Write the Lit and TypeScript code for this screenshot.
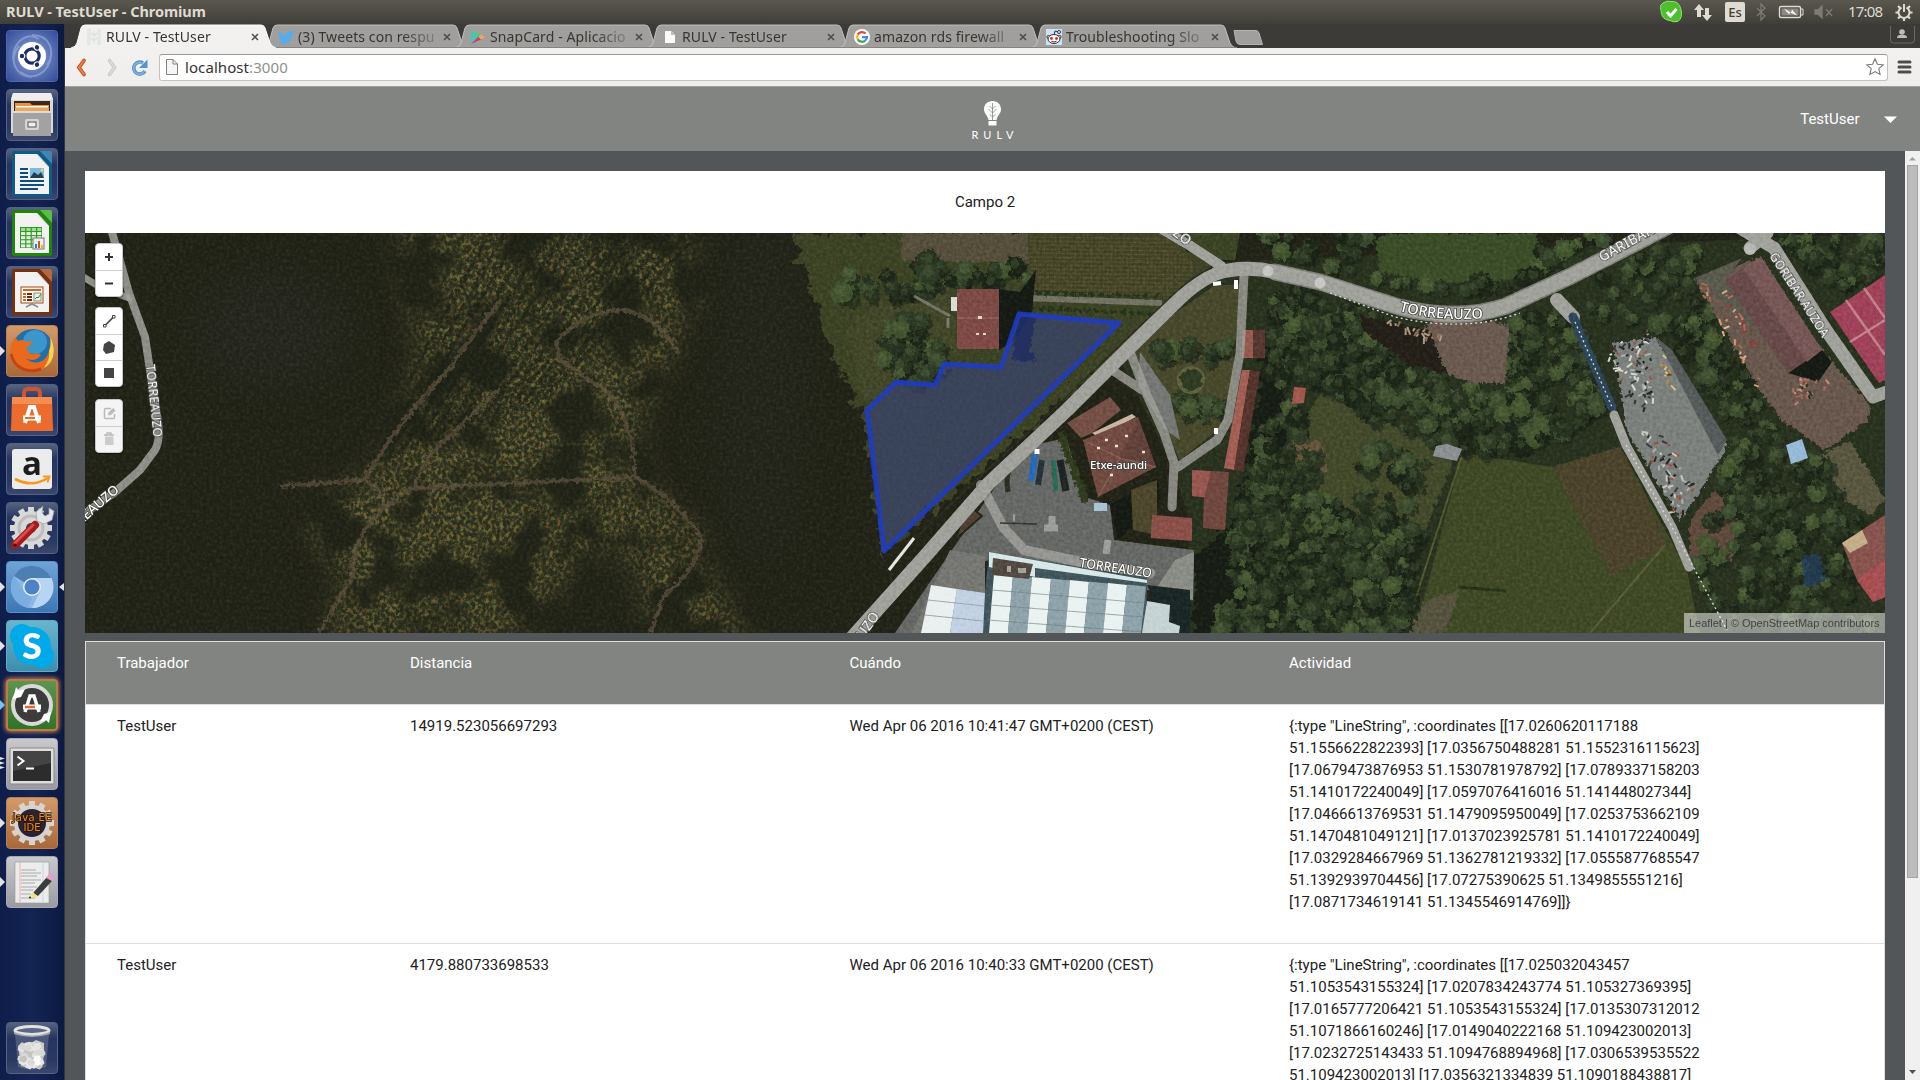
import { LitElement, html, svg, css } from 'lit';
import { customElement, property } from 'lit/decorators.js';

type Pt = [number, number];

const pts = (list: Pt[]) => list.map((p) => p.join(',')).join(' ');

// Small seeded generator so the scenery is the same on every render
function random(seed: number) {
    let s = seed;
    return () => {
        s = (s * 16807) % 2147483647;
        return s / 2147483647;
    };
}

function inside(x: number, y: number, poly: Pt[]) {
    let hit = false;
    for (let i = 0, j = poly.length - 1; i < poly.length; j = i++) {
        const [xi, yi] = poly[i];
        const [xj, yj] = poly[j];
        if (yi > y !== yj > y && x < ((xj - xi) * (y - yi)) / (yj - yi) + xi) hit = !hit;
    }
    return hit;
}

@customElement('dock-launcher')
export class DockLauncher extends LitElement {
    static styles = css`
    :host {
      display: flex;
      flex-direction: column;
      gap: 7px;
      box-sizing: border-box;
      width: 65px;
      height: 1056px;
      padding: 6px 0 6px 6px;
      background: linear-gradient(90deg, #0e1d49, #142453 50%, #0c1a42);
      border-right: 1px solid #34353f;
    }

    .item {
      position: relative;
      width: 52px;
      height: 52px;
      flex: none;
    }

    .item:last-child { margin-top: auto; }

    .tile {
      box-sizing: border-box;
      width: 52px;
      height: 52px;
      border-radius: 4px;
      background: linear-gradient(#56637f, #263560 30%, #2a3963 75%, #3b476d);
      border: 1px solid #56627f;
      overflow: hidden;
    }

    .tile.dash { background: radial-gradient(circle at 50% 50%, #8fa2d2 10%, #5a72b4 55%, #314b98); border-color: #4f68ad; }
    .tile.orange { background: linear-gradient(#d39a68, #a96839); border-color: #b88055; }
    .tile.blue { background: linear-gradient(#6fa4d6, #3d76b5); border-color: #5c91c4; }
    .tile.cyan { background: linear-gradient(#69b5cd, #3d8eae); border-color: #63abc4; }
    .tile.green { background: linear-gradient(#5c9550, #2f7427); border: 2px solid #c07a45; box-shadow: 0 0 4px 1px #c9814b; }
    .tile.gray { background: linear-gradient(#c9c9cd, #9a9aa2); border-color: #a9a9b1; }

    .tile svg {
      display: block;
      width: 52px;
      height: 52px;
      margin: -1px;
    }

    .tile.green svg { margin: -2px; }

    .mark {
      position: absolute;
      left: -6px;
      top: 15px;
      width: 6px;
      height: 22px;
    }

    .mark.right { left: 53px; }
  `;

    office(color: string, light: string, inner: unknown) {
        return svg`
      <path d="M8 3h26l12 13v31q0 2-2 2H8q-2 0-2-2V5q0-2 2-2z" fill="${color}"/>
      <path d="M34 3h10q2 0 2 2v11z" fill="${light}"/>
      <path d="M9 6h22l12 13v27H9z" fill="#f2f2f2"/>
      <path d="M31 6l12 13" stroke="#bbb"/>
      ${inner}`;
    }

    gear(cx: number, cy: number, r: number, fill: string) {
        const teeth = Array.from({ length: 12 }, (_, i) => i * 30);
        return svg`
      ${teeth.map((a) => svg`<rect x="${cx - 3}" y="${cy - r - 4}" width="6" height="8" fill="${fill}" transform="rotate(${a} ${cx} ${cy})"/>`)}
      <circle cx="${cx}" cy="${cy}" r="${r}" fill="${fill}"/>`;
    }

    icon(name: string) {
        switch (name) {
            case 'dash':
                return svg`
          <path d="M7 29C7 10 22 2 33 9M45 26C43 43 27 52 15 42M26 5c18 0 24 17 15 30M26 47C9 46 2 29 13 16" fill="none" stroke="#a6b6df" stroke-width="2" opacity=".55"/>
          <circle cx="26" cy="26" r="14" fill="#fff"/>
          <circle cx="26" cy="26" r="7.2" fill="none" stroke="#1c2d63" stroke-width="3.2"/>
          ${[60, 180, 300].map((a) => svg`<g transform="rotate(${a} 26 26)"><circle cx="36" cy="26" r="3.3" fill="#fff"/><circle cx="36" cy="26" r="2.2" fill="#1c2d63"/></g>`)}`;
            case 'files':
                return svg`
          <path d="M7 4h38l2 6v34H5V10z" fill="#d9d9d9"/><path d="M7 4h38l2 7H5z" fill="#eee"/>
          <path d="M8 12h36v12H8z" fill="#3a2a22"/>
          <path d="M9 14h15l2 2h17v8H9z" fill="#e8913f"/><path d="M10 17h32v1.500H10z" fill="#fff"/>
          <path d="M9 19h34v4H9z" fill="#eda557"/>
          <path d="M7 22h38v25H7z" fill="#a2a2a2"/><path d="M7 22h38v2H7z" fill="#dcdcdc"/>
          <rect x="19" y="30" width="14" height="11" rx="2" fill="#d5d5d5"/>
          <rect x="22" y="33" width="8" height="5" fill="#eee" stroke="#555"/>`;
            case 'writer':
                return this.office('#0d5a8c', '#3c87b3', svg`
          <path d="M14 21h8M14 25h8M14 29h8M14 33h24M14 37h24M14 41h18" stroke="#0d4f7c" stroke-width="2"/>
          <rect x="24" y="20" width="14" height="10" fill="#78bae3"/><path d="M24 30l4-6 4 3 3-3 3 6z" fill="#26404a"/><circle cx="36" cy="22" r="1.500" fill="#f5d44d"/>`);
            case 'calc':
                return this.office('#1e8708', '#5bbd45', svg`
          <rect x="14" y="20" width="22" height="21" fill="#2f9a24"/>
          ${[0, 1, 2, 3].map((c) => [0, 1, 2, 3, 4].map((r) => svg`<rect x="${15 + c * 5.4}" y="${21 + r * 4.1}" width="4.200" height="3" fill="${r ? '#e9f8e4' : '#9ede92'}"/>`))}
          <rect x="27" y="31" width="11" height="11" fill="#eee" stroke="#777"/>
          <path d="M29 41v-4h2v4z" fill="#1e88c9"/><path d="M32 41v-7h2v7z" fill="#d05a1d"/><path d="M35 41v-3h2v3z" fill="#e9bb23"/>`);
            case 'impress':
                return this.office('#7a2f0d', '#b4683d', svg`
          <rect x="15" y="21" width="22" height="16" fill="#fff6ef" stroke="#a24b18"/>
          <path d="M17 24h18" stroke="#c96a2a" stroke-width="2"/>
          <path d="M17 28h3M17 31h3M17 34h3" stroke="#c96a2a" stroke-width="2"/><path d="M21 28h5M21 31h5M21 34h5" stroke="#6a2b0d" stroke-width="2"/>
          <rect x="28" y="27" width="7" height="8" fill="#e5f2e2" stroke="#777" stroke-width=".8"/><path d="M29 33l2-2 1 1 3-4" fill="none" stroke="#3b8a2e"/>
          <path d="M26 37v2M26 38l-6 3M26 38l6 3" stroke="#888" stroke-width="1.500"/>`);
            case 'firefox':
                return svg`
          <circle cx="27" cy="25" r="21" fill="#1f6fae"/><circle cx="29" cy="17" r="12" fill="#4fb0dc" opacity=".6"/>
          <path d="M44 12c7 12 4 26-7 32C23 52 5 43 4 27c0-7 3-12 5-15l3 4c3-2 6-1 8 1l6-1c0 4-3 5-5 6 0 4 3 8 8 7 3-1 5 0 6 1-4 6-11 6-15 3 5 7 18 6 22-4 2-6 3-11 2-17z" fill="#e96a1c"/>
          <path d="M44 12c7 12 4 26-6 31 4-6 6-12 5-17 2-5 2-9 1-14z" fill="#f9d64a"/>
          <path d="M5 29c3 14 17 20 30 15" fill="none" stroke="#c8430f" stroke-width="3"/>`;
            case 'software':
                return svg`
          <path d="M18 17V9q0-4 4-4h8q4 0 4 4v8" fill="none" stroke="#c95634" stroke-width="4"/>
          <path d="M6 13h40l1 34H5z" fill="#ec6c2d"/><path d="M6 13h40v7H6z" fill="#f58d52"/>
          <path d="M19 39l5-16h4l5 16" fill="none" stroke="#fff" stroke-width="4"/><path d="M17 34h18" stroke="#fff" stroke-width="5"/><path d="M19 34h10" stroke="#ec6c2d" stroke-width="2"/>`;
            case 'amazon':
                return svg`
          <rect x="6" y="6" width="40" height="40" rx="3" fill="#ececec"/>
          <text x="26" y="32" text-anchor="middle" font-family="Open Sans, sans-serif" font-weight="700" font-size="33" fill="#1d1d1d">a</text>
          <path d="M9 36q17 9 33-1" fill="none" stroke="#f79a1c" stroke-width="2.600"/><path d="M37 33.500h6.500l-2 6" fill="none" stroke="#f79a1c" stroke-width="2"/>`;
            case 'settings':
                return svg`
          ${this.gear(25, 26, 17, '#d8d8d8')}
          <circle cx="25" cy="26" r="12" fill="none" stroke="#bcbcbc" stroke-width="3"/><circle cx="25" cy="26" r="5" fill="#36425f"/>
          <path d="M28 24L37 15" stroke="#c9ced1" stroke-width="7"/>
          <path d="M37 4l-7 6 1 9 7 3 8-4 2-9-5-3 0 6-4 2-3-3z" fill="#e3e6e8" stroke="#9aa0a4" stroke-width=".7"/>
          <path d="M9 43L29 23" stroke="#a31c1c" stroke-width="8" stroke-linecap="round"/><path d="M9 41L27 23" stroke="#df4a45" stroke-width="3" stroke-linecap="round"/>
          <circle cx="9" cy="43" r="1.500" fill="#390707"/>`;
            case 'chromium':
                return svg`
          <circle cx="26" cy="26" r="21" fill="#8bb8e5"/>
          <path d="M26 26L8 15A21 21 0 0 1 45 17H26z" fill="#4d7fb3"/>
          <path d="M26 17h19.500A21 21 0 0 1 26 47l8-17z" fill="#b7d5f1"/>
          <path d="M8 15l10 15 8 7-4 10A21 21 0 0 1 8 15z" fill="#7aaee1"/>
          <circle cx="26" cy="26" r="9" fill="#e4eff9"/><circle cx="26" cy="26" r="7.500" fill="#4d82c4"/>`;
            case 'skype':
                return svg`
          <circle cx="26" cy="26" r="19" fill="#00a9e9"/><circle cx="16" cy="16" r="12" fill="#00a9e9"/><circle cx="36" cy="36" r="12" fill="#00a9e9"/>
          <text x="26" y="38.500" text-anchor="middle" font-family="Lato, sans-serif" font-weight="900" font-size="36" fill="#fff">S</text>`;
            case 'updater':
                return svg`
          <circle cx="26" cy="26" r="19" fill="#3b3b3b"/><circle cx="26" cy="26" r="19" fill="none" stroke="#d9d9d9" stroke-width="4"/>
          <path d="M7 20l3-12 3 4 6-2-4 8zM45 33l-2 11-3-3-6 2 4-8z" fill="#fff"/>
          <path d="M19 33l5-16h4l5 16" fill="none" stroke="#fff" stroke-width="3.500"/><path d="M17 28h18" stroke="#fff" stroke-width="5"/><path d="M19 28h10" stroke="#e9692c" stroke-width="2.400"/>`;
            case 'terminal':
                return svg`
          <rect x="4" y="10" width="44" height="36" rx="1" fill="#dedede" stroke="#888"/>
          <rect x="7" y="13" width="38" height="30" fill="#2c2c2c"/><path d="M7 13h38v12L7 33z" fill="#444"/>
          <path d="M11.500 18.500l6 4.500-6 4.500M20 30.500h8" fill="none" stroke="#fff" stroke-width="2"/>`;
            case 'java':
                return svg`
          ${this.gear(26, 26, 18, '#d6d3d0')}
          <circle cx="26" cy="26" r="14" fill="#2a2334"/>
          <g font-family="DejaVu Sans, sans-serif" font-size="10" fill="#f08a1d" stroke="#2b1606" stroke-width="1.500" paint-order="stroke" text-anchor="middle">
            <text x="26" y="24" textLength="39">Java EE</text><text x="26" y="34" textLength="17">IDE</text>
          </g>`;
            case 'editor':
                return svg`
          <path d="M9 6h34v41H9z" fill="#ececec" stroke="#999" stroke-width=".6"/><path d="M14 6v41" stroke="#eeb3b3"/><path d="M37 6v41" stroke="#c9d3ee"/>
          <path d="M15 14h15M15 17h20M15 20h16M15 24h20M15 27h14M15 31h16M15 34h12M15 38h10M15 42h14" stroke="#aaa"/>
          <path d="M27 37L41 21l5 4-14 15z" fill="#3c3c3c"/><path d="M40 22l3-4q3-2 5 1l-2 6z" fill="#e2a0c6"/><path d="M23 42l4-6 5 5z" fill="#f1e27b"/><circle cx="24" cy="41.500" r="1" fill="#222"/>`;
            case 'trash': {
                const rnd = random(41);
                return svg`
          <path d="M9 12h34l-3 33q-14 5-28 0z" fill="#b9c4dc" opacity=".25"/>
          <path d="M12 24l4-4 5 3 4-2 5-3 8 3v12l-2 11q-10 4-21 0z" fill="#c9c9c5"/>
          ${Array.from({ length: 60 }, () => svg`<path d="M0 0l5-1 2 4-3 3-5-2z" fill="${['#e5e5e1', '#fafafa', '#c3c3bf', '#d8d8d4'][Math.floor(rnd() * 4)]}" transform="translate(${12 + rnd() * 21} ${20 + rnd() * 22})"/>`)}
          <ellipse cx="26" cy="8.500" rx="17" ry="4" fill="#5c6688" stroke="#e2e2e0" stroke-width="3"/><path d="M8 10q18 7 36 0v2q-18 6-36 0z" fill="#a9a9a5"/>`;
            }
        }
        return null;
    }

    render() {
        const items = [
            ['dash', 'dash', ''], ['files', '', ''], ['writer', '', ''], ['calc', '', ''], ['impress', '', ''],
            ['firefox', 'orange', 'one'], ['software', '', ''], ['amazon', '', ''], ['settings', '', ''],
            ['chromium', 'blue', 'both'], ['skype', 'cyan', 'one'], ['updater', 'green', 'alert'],
            ['terminal', 'gray', 'three'], ['java', 'orange', 'one'], ['editor', 'gray', 'one'], ['trash', '', ''],
        ];
        return html`${items.map(([name, tile, mark]) => html`
      <div class="item">
        <div class="tile ${tile}"><svg viewBox="0 0 52 52">${this.icon(name)}</svg></div>
        ${mark ? html`<svg class="mark" viewBox="0 0 6 22">
          ${mark === 'three'
                    ? svg`<path d="M0 4l5 1.500-5 1.500zM0 8.500l5 1.500-5 1.500zM0 13l5 1.500-5 1.500z" fill="#e2e2e6"/>`
                    : svg`<path d="M0 6l5 5-5 5z" fill="${mark === 'alert' ? '#71c3f0' : '#e2e2e6'}"/>`}
        </svg>` : ''}
        ${mark === 'both' ? html`<svg class="mark right" viewBox="0 0 6 22"><path d="M5 7l-5 4 5 4z" fill="#e2e2e6"/></svg>` : ''}
      </div>`)}`;
    }
}

@customElement('system-panel')
export class SystemPanel extends LitElement {
    static styles = css`
    :host {
      display: flex;
      align-items: center;
      justify-content: space-between;
      box-sizing: border-box;
      height: 24px;
      padding: 0 0 0 6px;
      background: linear-gradient(#5a584e, #3f3e39);
      color: #dfdbd2;
      font-family: 'Noto Sans', sans-serif;
    }

    .title {
      padding-bottom: 2px;
      font-weight: 700;
      font-size: 14.500px;
      line-height: 22px;
      letter-spacing: -0.050px;
    }

    svg { display: block; }
  `;

    render() {
        return html`
      <div class="title">RULV - TestUser - Chromium</div>
      <svg width="264" height="24" viewBox="1656 0 264 24" font-family="Noto Sans, sans-serif">
        <path d="M1664 2.500q3-2 7-1 8-1 10 8 2 8-3 12-5 1-8-1-9-1-9-10-2-6 3-8z" fill="#4cc02c" stroke="#93e070"/>
        <path d="M1667 12l3.500 4 6-7" fill="none" stroke="#fff" stroke-width="3"/>
        <path d="M1699 4l5 6h-3v7h-4v-7h-3zM1707 21l-5-6h3V8h4v7h3z" fill="#dfdbd2"/>
        <rect x="1725" y="2" width="20" height="20" rx="2" fill="#dfdbd2"/><text x="1735" y="17" text-anchor="middle" font-size="13" font-weight="500" fill="#3c3b37">Es</text>
        <path d="M1757 8l8 8-4 4V4l4 4-8 8" fill="none" stroke="#7d7b74" stroke-width="1.300"/>
        <rect x="1779.500" y="6.500" width="21" height="11" rx="1.500" fill="none" stroke="#dfdbd2" stroke-width="1.400"/><rect x="1781.500" y="8.500" width="17" height="7" fill="#8b8982"/><path d="M1801 9h2v6h-2" fill="none" stroke="#dfdbd2"/><path d="M1784 8.500l7 4 1-3 5 6-7-3-1 2z" fill="#fff"/>
        <path d="M1815 10h3l4-4v12l-4-4h-3zM1826 9l6 7M1832 9l-6 7" fill="#7d7b74" stroke="#7d7b74" stroke-width="1.300"/>
        <text x="1848" y="17" textLength="35" font-size="15" fill="#dfdbd2">17:08</text>
        <g fill="none" stroke="#dfdbd2" stroke-width="2"><path d="M1901.500 7.500a5.500 5.500 0 1 0 5 0M1904 4v8"/><path d="M1904 18v3M1898.500 12.500h-3M1909.500 12.500h3M1900 16.500l-2 2M1908 16.500l2 2M1900 8l-2-2M1908 8l2-2" stroke-width="2.200"/></g>
      </svg>`;
    }
}

@customElement('browser-tab')
export class BrowserTab extends LitElement {
    @property({ type: String }) label = '';
    @property({ type: String }) favicon = 'page';
    @property({ type: Boolean }) active = false;

    static styles = css`
    :host {
      display: block;
      position: relative;
      width: 192px;
      height: 24px;
    }

    .shape {
      position: absolute;
      left: -6px;
      top: 0;
    }

    .content {
      position: relative;
      display: flex;
      align-items: center;
      box-sizing: border-box;
      height: 24px;
      padding: 1px 0 0 9px;
    }

    .icon { width: 16px; height: 16px; flex: none; margin-right: 4px; }

    .label {
      width: 138px;
      overflow: hidden;
      white-space: nowrap;
      font-family: 'Noto Sans', sans-serif;
      font-size: 14px;
      line-height: 23px;
      letter-spacing: 0.100px;
      color: #36352f;
    }

    .label.fade {
      -webkit-mask-image: linear-gradient(90deg, #000 104px, rgba(0, 0, 0, 0.250) 138px);
      mask-image: linear-gradient(90deg, #000 104px, rgba(0, 0, 0, 0.250) 138px);
    }

    .close { width: 8px; height: 8px; margin-left: 7px; }
  `;

    glyph() {
        switch (this.favicon) {
            case 'rulv':
                return svg`<g stroke="#dce4e2" stroke-width="1.300" fill="none"><path d="M2 1h2v14H2zM12 1h2v14h-2zM8 2v13M8 7l-3-3M8 7l3-3M8 12L5 9M8 12l3-3"/></g>`;
            case 'twitter':
                return svg`<path d="M16 3.500c-.6.300-1.200.4-1.900.5.700-.4 1.200-1 1.400-1.800-.6.400-1.300.6-2 .8A3.300 3.300 0 0 0 7.900 6 9.300 9.300 0 0 1 1.100 2.500a3.300 3.300 0 0 0 1 4.400c-.5 0-1-.2-1.500-.4 0 1.600 1.100 2.900 2.600 3.200-.5.100-1 .2-1.500.1.400 1.300 1.600 2.200 3.100 2.300A6.600 6.600 0 0 1 0 13.400 9.300 9.300 0 0 0 14.400 5.100z" fill="#55acee"/>`;
            case 'play':
                return svg`<path d="M1 1l8 7-8 7z" fill="#4ac2b8"/><path d="M1 1l11 5-3 3z" fill="#57c87a"/><path d="M1 15l11-5-3-3z" fill="#ca3c6c"/><path d="M11 5.500l4 2.500-4 2.500L8.500 8z" fill="#f0a860"/>`;
            case 'google':
                return svg`<circle cx="8" cy="8" r="8" fill="#fff"/><g fill="none" stroke-width="2.300"><path d="M11.500 4.500A4.900 4.900 0 0 0 3.800 5.600" stroke="#ea4335"/><path d="M3.800 5.600a4.900 4.900 0 0 0 0 4.800" stroke="#fbbc05"/><path d="M3.800 10.400a4.900 4.900 0 0 0 7.500 1.100" stroke="#34a853"/><path d="M11.300 11.500A4.900 4.900 0 0 0 12.900 8.200H8" stroke="#4285f4"/></g>`;
            case 'reddit':
                return svg`<rect width="16" height="16" fill="#cee3f8"/><path d="M8 6l1-4 4 1" fill="none" stroke="#333"/><circle cx="13" cy="3" r="1.500" fill="#fff" stroke="#333"/><circle cx="2.500" cy="8" r="1.600" fill="#fff" stroke="#333"/><circle cx="13.500" cy="8" r="1.600" fill="#fff" stroke="#333"/><ellipse cx="8" cy="10" rx="6" ry="4.500" fill="#fff" stroke="#333"/><circle cx="5.500" cy="9.500" r="1.400" fill="#f31e1e"/><circle cx="10.500" cy="9.500" r="1.400" fill="#f31e1e"/><path d="M5.500 12.300q2.500 1.500 5 0" fill="none" stroke="#333"/>`;
        }
        return svg`<path d="M3 2h6l4 4v8H3z" fill="#fbfbfb"/><path d="M9 2v4h4z" fill="#bdbdbd"/>`;
    }

    render() {
        const fill = this.active ? '#f2f1f0' : '#a09f9d';
        return html`
      <svg class="shape" width="208" height="24">
        <path d="M0 24Q5 23 6 19L10 4Q11 1 14 1H190Q193 1 194 4L199 19Q201 23 205 24z" fill="${fill}"/>
        <path d="M0 24Q5 23 6 19L10 4Q11 1 14 1H190Q193 1 194 4L199 19Q201 23 205 24" fill="none" stroke="${this.active ? '#fff' : '#c0bfbc'}"/>
        ${this.active ? '' : svg`<path d="M0 23.500H206" stroke="#85837f"/>`}
      </svg>
      <div class="content">
        <svg class="icon" viewBox="0 0 16 16">${this.glyph()}</svg>
        <div class="label ${this.label.length > 16 ? 'fade' : ''}">${this.label}</div>
        <svg class="close" viewBox="0 0 8 8"><path d="M1 1l6 6M7 1L1 7" stroke="#4c4b47" stroke-width="1.500"/></svg>
      </div>`;
    }
}

@customElement('browser-chrome')
export class BrowserChrome extends LitElement {
    static styles = css`
    :host { display: block; }

    .tabs {
      display: flex;
      height: 24px;
      padding-left: 12px;
      background: #3c3b37;
    }

    browser-tab { z-index: 1; }
    browser-tab[active] { z-index: 2; }
    .new { margin: 6px 0 0 3px; }
    .person { margin: 2px 5px 0 auto; }

    .toolbar {
      display: flex;
      align-items: center;
      box-sizing: border-box;
      height: 39px;
      padding: 0 8px 0 9px;
      background: linear-gradient(#f2f1f0, #efeeed);
      border-bottom: 1px solid #a2a09d;
    }

    .nav { width: 86px; height: 24px; margin-right: -1px; }

    .url {
      display: flex;
      align-items: center;
      flex: 1;
      box-sizing: border-box;
      height: 27px;
      margin-right: 8px;
      padding: 0 2px 0 6px;
      background: #fff;
      border: 1px solid #c4c2bf;
      border-top-color: #9a9895;
      border-radius: 3px;
      font-family: 'Noto Sans', sans-serif;
      font-size: 15px;
      letter-spacing: 0.080px;
      color: #333;
    }

    .url span { margin-left: 7px; }
    .url i { font-style: normal; color: #8f8f8c; }
    .star { margin-left: auto; }
  `;

    render() {
        return html`
      <div class="tabs">
        <browser-tab active label="RULV - TestUser" favicon="rulv"></browser-tab>
        <browser-tab label="(3) Tweets con respu" favicon="twitter"></browser-tab>
        <browser-tab label="SnapCard - Aplicacio" favicon="play"></browser-tab>
        <browser-tab label="RULV - TestUser"></browser-tab>
        <browser-tab label="amazon rds firewall" favicon="google"></browser-tab>
        <browser-tab label="Troubleshooting Slo" favicon="reddit"></browser-tab>
        <svg class="new" width="32" height="15"><path d="M2 .5H24Q26 .5 27 3l3.500 11.500H8Q5 14.500 4 11z" fill="#a09f9d" stroke="#b5b3b0"/></svg>
        <svg class="person" width="25" height="20"><path d="M.5 0v14q0 3 3 3h18q3 0 3-3V0" fill="none" stroke="#6b6a65"/><circle cx="12" cy="6" r="2.800" fill="#bdbcb8"/><path d="M7 12q0-3 3-3h4q3 0 3 3z" fill="#bdbcb8"/></svg>
      </div>
      <div class="toolbar">
        <svg class="nav" viewBox="74 55 86 24">
          <path d="M84 60.500l-5 7 5 7" fill="none" stroke="#c94b1d" stroke-width="3.800" stroke-linecap="round"/><path d="M84 60.500l-5 7 5 7" fill="none" stroke="#ec7b45" stroke-width="2" stroke-linecap="round"/>
          <path d="M109.500 60.500l5 7-5 7" fill="none" stroke="#c6c4c1" stroke-width="3.500" stroke-linecap="round"/><path d="M109.500 60.500l5 7-5 7" fill="none" stroke="#dddbd8" stroke-width="2" stroke-linecap="round"/>
          <path d="M145 71a6 6 0 1 1-2-8" fill="none" stroke="#5a93cc" stroke-width="3.600"/><path d="M147.500 59.500v8.500h-8.500z" fill="#5a93cc"/><path d="M144.500 71a5.800 5.800 0 1 1-2-7.500" fill="none" stroke="#85b3e0" stroke-width="1.500"/>
        </svg>
        <div class="url">
          <svg width="12" height="16"><path d="M.5.500h6.500l4.500 4.500v10.500H.5z" fill="#f5f5f5" stroke="#85837f"/><path d="M7 .5V5h4.500" fill="none" stroke="#85837f"/></svg>
          <span>localhost<i>:3000</i></span>
          <svg class="star" width="20" height="20" viewBox="0 0 20 20"><path d="M10 1.800l2.400 5.400 5.800.6-4.400 3.900 1.300 5.800L10 14.600l-5.100 2.900 1.300-5.800L1.800 7.800l5.800-.6z" fill="#fff" stroke="#777" stroke-width="1.100"/></svg>
        </div>
        <svg width="16" height="14"><path d="M3 2h11M3 7h11M3 12h11" stroke="#4c4c4a" stroke-width="3" stroke-linecap="round"/></svg>
      </div>`;
    }
}

// Map outlines are written in screen coordinates, the viewBox starts at 85,233
const CROPS: Pt[] = [[400, 225], [690, 225], [695, 300], [672, 350], [636, 425], [640, 475], [695, 530], [715, 590], [752, 640], [655, 640], [635, 560], [598, 545], [510, 640], [325, 640], [345, 580], [310, 530], [322, 490], [370, 478], [400, 420], [420, 350], [410, 300]];
const FIELD: Pt[] = [[1019, 314], [1119, 323], [884, 551], [867, 410], [896, 382], [935, 385], [944, 364], [1001, 367]];

const WOODS: { area: Pt[]; count: number; seed: number }[] = [
    { area: [[1230, 233], [1370, 233], [1362, 268], [1400, 281], [1535, 276], [1540, 250], [1590, 233], [1640, 233], [1560, 270], [1500, 292], [1400, 289], [1330, 268], [1235, 260]], count: 160, seed: 5 },
    { area: [[1275, 284], [1320, 295], [1390, 320], [1440, 350], [1440, 383], [1500, 390], [1510, 320], [1562, 310], [1590, 360], [1608, 405], [1580, 425], [1530, 452], [1450, 450], [1350, 415], [1320, 385], [1265, 385]], count: 620, seed: 9 },
    { area: [[1575, 285], [1640, 255], [1700, 240], [1690, 280], [1745, 370], [1775, 420], [1786, 440], [1830, 470], [1860, 520], [1850, 600], [1885, 633], [1720, 633], [1690, 560], [1720, 490], [1732, 440], [1690, 360], [1640, 325], [1600, 340]], count: 760, seed: 17 },
    { area: [[1240, 500], [1260, 470], [1310, 480], [1425, 535], [1420, 575], [1400, 633], [1220, 633]], count: 560, seed: 23 },
    { area: [[1265, 400], [1290, 400], [1330, 470], [1250, 500]], count: 90, seed: 29 },
    { area: [[878, 325], [920, 318], [944, 345], [938, 375], [920, 384], [885, 375]], count: 60, seed: 31 },
    { area: [[838, 272], [895, 275], [920, 260], [1030, 265], [1035, 280], [950, 285], [915, 298], [840, 296]], count: 70, seed: 37 },
    { area: [[1155, 343], [1230, 340], [1235, 350], [1210, 365], [1155, 360]], count: 20, seed: 43 },
    { area: [[1170, 395], [1222, 400], [1222, 430], [1180, 420]], count: 20, seed: 47 },
    { area: [[1740, 233], [1870, 233], [1885, 260], [1840, 300], [1800, 260], [1770, 240]], count: 110, seed: 53 },
    { area: [[1355, 440], [1430, 460], [1430, 480], [1405, 520], [1355, 500]], count: 32, seed: 59 },
];

@customElement('field-map')
export class FieldMap extends LitElement {
    static styles = css`
    :host {
      display: block;
      position: relative;
      height: 400px;
      overflow: hidden;
      background: #24251a;
    }

    .scene { display: block; width: 1800px; height: 400px; }

    .scene filter { color-interpolation-filters: sRGB; }

    .label {
      fill: #fff;
      stroke: #3a3d36;
      stroke-width: 1.500px;
      paint-order: stroke;
      font-family: 'Noto Sans', sans-serif;
      font-weight: 500;
    }

    .road { fill: none; stroke: #a2a29d; stroke-linejoin: round; stroke-linecap: round; }
    .road.wet { stroke: #2d4659; }
    .track { fill: none; stroke: #5c503e; stroke-width: 4px; opacity: 0.750; }
    .shadow { fill: #151b14; }
    .grain { mix-blend-mode: soft-light; }

    .controls {
      position: absolute;
      left: 10px;
      top: 10px;
      display: flex;
      flex-direction: column;
      gap: 10px;
    }

    .group {
      box-sizing: border-box;
      width: 28px;
      background: #fff;
      border: 1px solid #c6c6c6;
      border-radius: 4px;
      box-shadow: 0 1px 2px rgba(0, 0, 0, 0.500);
      overflow: hidden;
    }

    .group.off { background: #f4f4f4; margin-top: 2px; }
    .group svg { display: block; width: 26px; height: 26px; }
    .group svg + svg { border-top: 1px solid #ccc; height: 25px; }

    .credit {
      position: absolute;
      right: 0;
      bottom: 0;
      box-sizing: border-box;
      width: 201px;
      height: 20px;
      padding: 0 5px;
      background: rgba(255, 255, 255, 0.500);
      font: 11px/20px 'Liberation Sans', sans-serif;
      letter-spacing: -0.020px;
      white-space: nowrap;
      color: #444;
    }
  `;

    trees(area: Pt[], count: number, seed: number) {
        const rnd = random(seed * 7919);
        const xs = area.map((p) => p[0]);
        const ys = area.map((p) => p[1]);
        const [x0, x1, y0, y1] = [Math.min(...xs), Math.max(...xs), Math.min(...ys), Math.max(...ys)];
        const tones = ['#27321f', '#2f3c25', '#3a4a2d', '#42532f', '#2b3722', '#1d2618'];
        const out = [];
        for (let i = 0; i < count; i++) {
            const x = x0 + rnd() * (x1 - x0);
            const y = y0 + rnd() * (y1 - y0);
            const r = 3 + rnd() * 8;
            const tone = tones[Math.floor(rnd() * tones.length)];
            if (!inside(x, y, area)) continue;
            out.push(svg`<circle cx="${x + 3}" cy="${y + 3}" r="${r}" fill="#161d13" opacity=".5"/><circle cx="${x}" cy="${y}" r="${r}" fill="${tone}"/><circle cx="${x - 1}" cy="${y - 2}" r="${r * 0.5}" fill="#5f7048" opacity=".3"/>`);
        }
        return out;
    }

    // Loose stacks of timber and scrap in the yards on the right
    debris(area: Pt[], count: number, seed: number, colors: string[]) {
        const rnd = random(seed * 7919);
        const xs = area.map((p) => p[0]);
        const ys = area.map((p) => p[1]);
        const [x0, x1, y0, y1] = [Math.min(...xs), Math.max(...xs), Math.min(...ys), Math.max(...ys)];
        const out = [];
        for (let i = 0; i < count; i++) {
            const x = x0 + rnd() * (x1 - x0);
            const y = y0 + rnd() * (y1 - y0);
            const w = 2 + rnd() * 5;
            const color = colors[Math.floor(rnd() * colors.length)];
            const turn = rnd() * 180;
            if (!inside(x, y, area)) continue;
            out.push(svg`<rect x="${x}" y="${y}" width="${w}" height="2" fill="${color}" transform="rotate(${turn} ${x} ${y})"/>`);
        }
        return out;
    }

    ground() {
        const rows = Array.from({ length: 15 }, (_, i) => i);
        return svg`
      <rect x="85" y="233" width="1800" height="400" fill="#232418"/>
      <g filter="url(#soft)"><ellipse cx="270" cy="330" rx="70" ry="50" fill="#262820"/><ellipse cx="760" cy="380" rx="40" ry="190" fill="#24261c"/></g>
      <g mask="url(#cropsMask)">
        <rect x="280" y="233" width="490" height="400" fill="#2c2f1d"/>
        <rect x="280" y="233" width="490" height="400" filter="url(#speckle)"/>
        <rect x="280" y="233" width="490" height="400" filter="url(#patches)"/>
        <g filter="url(#fine)">
          ${rows.map((i) => svg`<path d="M${360 + i * 13} ${470 - i * 5}L${490 + i * 15} 233" stroke="#1d2016" stroke-width="3.500" opacity=".55"/>`)}
        </g>
      </g>
      <g filter="url(#fine)">
        <path class="track" d="M678 353Q658 315 622 310Q585 310 556 342L560 360L605 390Q636 420 634 477L413 488Q352 520 352 577L319 633"/>
        <path class="track" d="M280 486L364 480L385 495M636 478Q672 495 700 535Q706 560 663 597L651 633"/>
        <path class="track" d="M413 488L430 455L500 388M364 480Q400 420 448 370L500 300" opacity=".4"/>
      </g>
      <polygon points="796,233 1165,233 1215,268 1120,353 884,551 863,420 824,333 800,260" fill="#3c4325" filter="url(#rough)"/>
      <polygon points="903,233 1028,233 1028,263 900,260" fill="#554f3c" filter="url(#fine)"/>
      <polygon points="845,330 870,310 950,280 960,350 900,382 867,405" fill="#484c2d" opacity=".5" filter="url(#rough)"/>
      <polygon points="1028,233 1164,233 1200,263 1170,296 1030,290" fill="#424428"/>
      ${rows.map((i) => svg`<path d="M${1030} ${237 + i * 4}L${1168 + Math.min(i, 7) * 4 - Math.max(i - 7, 0) * 3} ${239 + i * 4}" stroke="#594e2d" stroke-width="1.400" stroke-dasharray="3 1"/>`)}
      <path d="M1026 298L1162 303" stroke="#858378" stroke-width="6" opacity=".75"/>
      <path d="M1026 292L1160 297M1030 308L1155 314" stroke="#26341c" stroke-width="4" stroke-dasharray="6 3" filter="url(#fine)"/>
      <polygon points="1220,262 1885,233 1885,633 1180,633 1190,520 1170,460 1120,360" fill="#29321f"/>
      <polygon points="1160,233 1240,233 1235,260 1220,260" fill="#3b4425"/>
      <polygon points="1130,345 1215,285 1240,285 1230,420 1180,460 1160,420" fill="#48492c"/>
      <polygon points="1262,350 1290,360 1275,480 1235,633 1192,633 1194,550 1228,530 1245,470" fill="#181e15" filter="url(#rough)"/>
      <polygon points="1375,240 1390,233 1536,233 1549,272 1500,281 1440,283 1380,272" fill="#3b4d28" filter="url(#fine)"/>
      <polygon points="1320,395 1360,410 1455,455 1420,545 1300,485 1290,440" fill="#434a2b" filter="url(#fine)"/>
      <polygon points="1295,440 1320,445 1325,475 1300,480" fill="#66563c" filter="url(#rough)"/>
      <polygon points="1462,453 1553,467 1620,447 1687,570 1700,633 1415,633" fill="#404926"/>
      <polygon points="1553,467 1620,447 1668,545 1612,575" fill="#4b432b" filter="url(#fine)"/>
      <path d="M1462 455L1415 600M1665 545L1590 633" stroke="#67683a" stroke-width="2" fill="none" opacity=".7"/>
      <path d="M1458 587L1506 591" stroke="#26331a" stroke-width="3"/>
      <polygon points="1690,520 1715,490 1738,520 1732,560 1690,560" fill="#5f4a3d" filter="url(#fine)"/>
      <polygon points="1820,455 1850,440 1885,500 1870,515 1845,500" fill="#595740" filter="url(#fine)"/>
      <polygon points="1425,600 1460,590 1445,633 1410,633" fill="#55533e" filter="url(#fine)"/>`;
    }

    buildings() {
        const bays = Array.from({ length: 8 }, (_, i) => i);
        return svg`
      <polygon points="1000,480 1020,448 1066,438 1085,497 1110,505 1114,540 1194,550 1193,595 1146,590 989,560 960,570 925,633 895,633" fill="#666965"/>
      <polygon points="1140,352 1170,395 1180,440 1165,430 1138,385" fill="#767875"/>
      <polygon points="1175,560 1194,552 1193,600 1152,595" fill="#8b8d87"/>
      <polygon points="985,556 950,550 912,633 985,633" fill="#777873"/>
      <path d="M968 505L982 516L957 538" fill="#4d4033" stroke="#26261f" stroke-width="2"/>
      <polygon points="1147,585 1190,590 1190,633 1170,633" fill="#1b2626"/>
      <polygon points="989,552 1147,578 1146,633 981,633" fill="#41565c"/>
      ${bays.map((i) => svg`<polygon points="${994 + i * 19},${574 + i * 1.500} ${1013 + i * 19},${576 + i * 1.500} ${1008 + i * 19},633 ${989 + i * 19},633" fill="${i % 2 ? '#8fa3aa' : '#eaf3f2'}"/>`)}
      <path d="M992 590L1146 603M990 605L1144 617M988 620L1143 632" stroke="#728084" stroke-width=".8" opacity=".8"/>
      <polygon points="989,552 1147,580 1147,583 1035,568 1035,577 989,567" fill="#d8e8e8"/>
      <polygon points="993,558 1033,564 1029,579 992,575" fill="#514942"/><path d="M1007 566h4v6h-4zM1018 568h8v5h-8z" fill="#a9a59c"/>
      <polygon points="931,585 957,589 950,633 921,633" fill="#eaf0f0"/><polygon points="957,589 985,593 983,633 950,633" fill="#c2d1e3"/>
      <path d="M928 600L984 606M925 615L983 621" stroke="#9ba6af"/>
      <polygon points="1147,601 1170,605 1169,622 1180,626 1179,633 1142,633" fill="#c6d3d4"/>
      <polygon class="shadow" points="999,289 1020,292 1036,270 1032,312 1015,340 999,350"/>
      <rect x="957" y="289" width="42" height="60" fill="#7e4a45"/><path d="M957 318H999" stroke="#8f5a52" stroke-width="2"/><path d="M914 296L950 316M948 318v10" stroke="#77766b" stroke-width="3"/>
      <rect x="951" y="297" width="6" height="14" fill="#dcdcd6"/><path d="M978 316h4v3h-4zM976 333h3v2h-3zM983 333h3v2h-3z" fill="#e7d5c8"/>
      <polygon points="1067,423 1110,397 1121,410 1092,433 1081,438" fill="#755046"/>
      <polygon points="1092,433 1132,414 1136,417 1098,437" fill="#c9b5a4"/>
      <polygon points="1083,440 1138,417 1156,467 1098,497" fill="#724b42"/><polygon points="1120,458 1138,417 1156,467" fill="#62423a"/><path d="M1083 440L1120 458L1098 497M1120 458L1156 467" stroke="#8d6458" fill="none"/>
      <path d="M1097 448h3M1105 440h3M1115 446h3M1125 436h3M1142 452h3M1110 475h3" stroke="#e9e2d8" stroke-width="2.500"/>
      <polygon class="shadow" points="1110,505 1158,478 1160,500 1118,540"/>
      <polygon points="1131,490 1157,480 1157,535 1133,530" fill="#4d472d"/>
      <rect x="1242" y="330" width="11" height="28" fill="#935a50"/><rect x="1253" y="330" width="12" height="28" fill="#56382f"/>
      <polygon points="1242,370 1250,370 1234,470 1224,468" fill="#a45f55"/><polygon points="1250,370 1260,372 1243,472 1234,470" fill="#55352d"/>
      <polygon points="1192,470 1211,471 1208,498 1192,496" fill="#985750"/><polygon points="1211,471 1229,472 1225,530 1203,528 1204,498" fill="#70483f"/>
      <polygon points="1152,515 1192,518 1192,541 1151,538" fill="#8b504a"/>
      <polygon points="1294,387 1306,388 1304,403 1292,404" fill="#a15950"/><polygon points="1436,446 1447,444 1462,449 1457,461 1433,456" fill="#8d9092"/>
      <path d="M1035 454L1031 481" stroke="#246bbd" stroke-width="6"/><path d="M1037 449v5" stroke="#fff" stroke-width="5"/><path d="M1053 460L1056 491" stroke="#296b59" stroke-width="5"/><path d="M1060 460L1066 491" stroke="#1d2522" stroke-width="7"/><path d="M1042 460L1038 485" stroke="#27333b" stroke-width="6"/>
      <path d="M1017 457Q1004 470 1008 492" fill="none" stroke="#292f23" stroke-width="5"/>
      <path d="M1060 432L1086 502" stroke="#313c1e" stroke-width="8" filter="url(#fine)"/>
      <path d="M1094 503h13v8h-13z" fill="#a9c4d5"/>
      <circle cx="1191" cy="380" r="14" fill="#5e6240"/><circle cx="1191" cy="380" r="11" fill="#2f3b22" filter="url(#fine)"/>
      <polygon points="1425,325 1450,315 1510,325 1505,383 1470,383 1446,372" fill="#6a5a50" filter="url(#fine)"/>
      <polygon points="1360,315 1430,330 1445,372 1410,365 1362,330" fill="#241f18" filter="url(#fine)"/>
      <polygon points="1612,343 1656,337 1727,447 1703,487 1680,520 1628,433" fill="#7d817d" filter="url(#fine)"/>
      <polygon points="1656,337 1672,350 1727,440 1718,455" fill="#565c5c"/>
      <polygon points="1695,280 1761,257 1822,350 1870,405 1868,420 1825,450 1782,420 1760,390" fill="#68584e" filter="url(#fine)"/>
      <polygon points="1695,278 1742,258 1725,280 1762,336" fill="#5a5a4d"/>
      <polygon class="shadow" points="1822,350 1832,362 1818,382 1788,373"/>
      <polygon points="1761,257 1822,350 1788,373 1725,280" fill="#684a4a"/><polygon points="1761,257 1743,268 1807,362 1822,350" fill="#785757"/>
      <polygon points="1885,275 1830,312 1879,383 1885,380" fill="#a0425a"/><path d="M1846 300L1885 355M1864 288L1885 318M1850 342L1885 320" stroke="#c08389" stroke-width="2.500"/>
      <polygon points="1786,445 1802,439 1808,458 1791,464" fill="#97bad8"/>
      <polygon points="1800,558 1818,552 1826,580 1806,588" fill="#243f59" opacity=".8" filter="url(#fine)"/>
      <polygon points="1842,543 1885,515 1885,597 1873,602 1857,580" fill="#89544d"/><polygon points="1857,580 1885,560 1885,597 1873,602" fill="#a84f53"/><polygon points="1842,543 1862,530 1868,543 1850,553" fill="#c4ae8a"/>`;
    }

    roads() {
        return svg`
      <path class="road" d="M850 640L928 553L989 483L1067 410L1124 353L1181 297Q1205 275 1225 271Q1250 266 1275 272L1320 282L1399 307Q1458 322 1506 306L1573 275L1690 215" stroke-width="14"/>
      <path class="road" d="M1275 272L1320 282L1399 307Q1458 322 1506 306L1573 275L1690 215" stroke-width="17" opacity=".7"/>
      <path class="road" d="M1160 228L1189 245L1221 266" stroke-width="10"/>
      <g opacity=".8">
        <path class="road" d="M1244 275L1240 353L1228 420L1217 440L1178 467" stroke-width="9"/>
        <path class="road" d="M1130 352L1146 393L1164 433L1174 463L1172 507M1112 370L1142 390" stroke-width="9"/>
        <path class="road" d="M981 485L1003 527L1024 550L1081 562L1150 573" stroke-width="10"/>
      </g>
      <path class="road" d="M1740 228L1774 248L1826 330L1873 397L1892 390M1767 233L1750 248" stroke-width="13"/>
      <path class="road" d="M110 225L129 293L145 337L156 410Q162 438 155 450L140 470L114 493L75 520" stroke-width="8" opacity=".85"/>
      <path class="road" d="M80 275L100 287L129 298" stroke-width="7" opacity=".85"/>
      <path class="road" d="M1557 300L1573 317" stroke-width="14"/>
      <path class="road wet" d="M1573 317L1612 407" stroke-width="9"/>
      <path class="road" d="M1614 415L1626 445L1672 527L1689 567" stroke-width="9"/>
      <path d="M1575 322L1612 407M1626 445L1672 527L1727 630M1330 293L1395 317Q1465 333 1520 313" fill="none" stroke="#d8dde0" stroke-width="1.300" stroke-dasharray="2 3"/>
      <path d="M905 548L985 472L1060 403L1120 345L1176 292Q1198 273 1212 268" fill="none" stroke="#2b2f22" stroke-width="1.500"/>
      <path d="M889 570L914 538" stroke="#e5e7e2" stroke-width="3"/>
      <circle cx="1268" cy="271" r="5.500" fill="#c6c6c2"/><circle cx="1320" cy="283" r="5.500" fill="#c6c6c2"/><circle cx="1750" cy="249" r="6" fill="#b9b9b5"/>
      <path d="M1213 284l8-1M1236 280v9M1216 428v6" stroke="#fff" stroke-width="4"/>
      <path d="M1044 528h14M1052 516v14M1108 540l-2 14M1013 518h2" stroke="#b5b6b1" stroke-width="7" opacity=".7"/>
      <path d="M1000 523L1037 524" stroke="#333" stroke-width="1.500"/>`;
    }

    render() {
        return html`
      <svg class="scene" viewBox="85 233 1800 400">
        <defs>
          <filter id="soft" x="-60%" y="-60%" width="220%" height="220%"><feGaussianBlur stdDeviation="22"/></filter>
          <filter id="rough" x="-5%" y="-5%" width="110%" height="110%"><feTurbulence type="fractalNoise" baseFrequency=".09" numOctaves="3" seed="4"/><feDisplacementMap in="SourceGraphic" scale="26" xChannelSelector="R" yChannelSelector="G"/></filter>
          <filter id="fine" x="-5%" y="-5%" width="110%" height="110%"><feTurbulence type="fractalNoise" baseFrequency=".25" numOctaves="2" seed="8"/><feDisplacementMap in="SourceGraphic" scale="8" xChannelSelector="R" yChannelSelector="G"/></filter>
          <filter id="speckle" x="0" y="0" width="100%" height="100%"><feTurbulence type="fractalNoise" baseFrequency=".28 .24" numOctaves="3" seed="12"/><feColorMatrix values=".4 .1 0 0 .07  .1 .35 0 0 .08  0 .1 .15 0 .06  3 2.600 0 0 -2.400"/></filter>
          <filter id="patches" x="0" y="0" width="100%" height="100%"><feTurbulence type="fractalNoise" baseFrequency=".02" numOctaves="3" seed="21"/><feColorMatrix values="0 0 0 0 .13  0 0 0 0 .14  0 0 0 0 .09  5 0 0 0 -2.200"/></filter>
          <filter id="grain" x="0" y="0" width="100%" height="100%"><feTurbulence type="fractalNoise" baseFrequency=".3" numOctaves="3" seed="3"/><feColorMatrix values="1.200 0 0 0 -.1  1.200 0 0 0 -.1  1.200 0 0 0 -.1  0 0 0 0 1"/></filter>
          <filter id="feather" x="-10%" y="-10%" width="120%" height="120%"><feGaussianBlur stdDeviation="14"/></filter>
          <mask id="cropsMask" maskUnits="userSpaceOnUse" x="85" y="233" width="800" height="400"><polygon points="${pts(CROPS)}" fill="#fff" filter="url(#feather)"/></mask>
          <path id="streetEast" d="M1399 311Q1440 322 1486 318"/>
        </defs>
        ${this.ground()}
        <g filter="url(#fine)">${WOODS.map((w) => this.trees(w.area, w.count, w.seed))}</g>
        ${this.buildings()}
        ${this.roads()}
        ${this.debris([[1605, 350], [1650, 330], [1655, 400], [1640, 415]], 150, 3, ['#d8d6d0', '#3a3c3b', '#8f5f50', '#aab0ae', '#222725'])}
        ${this.debris([[1640, 430], [1660, 430], [1700, 490], [1690, 520], [1670, 510]], 160, 6, ['#c9c7c0', '#3a3c3b', '#9d4f42', '#aab0ae', '#222725'])}
        ${this.debris([[1653, 350], [1665, 355], [1682, 390], [1675, 395]], 40, 8, ['#c08a3c', '#5c4b34', '#d8c48a'])}
        ${this.debris([[1695, 280], [1704, 275], [1762, 380], [1755, 390]], 120, 11, ['#d39a72', '#e2b48d', '#a96a4d'])}
        ${this.debris([[1720, 290], [1730, 290], [1762, 340], [1752, 345]], 80, 13, ['#d8a48d', '#b56b62', '#8b3f3d'])}
        ${this.debris([[1790, 385], [1810, 370], [1840, 385], [1795, 405]], 60, 14, ['#a96a5d', '#243226', '#c99078'])}
        ${this.debris([[1393, 318], [1448, 335], [1440, 345], [1390, 325]], 60, 21, ['#8d705a', '#b09a85'])}
        <rect class="grain" x="85" y="233" width="1800" height="400" filter="url(#grain)" opacity=".25"/>
        <polygon points="${pts(FIELD)}" fill="#4c4a48" fill-opacity=".5"/>
        <polygon points="1019,318 1036,316 1030,350 1036,362 1012,360" fill="#1b2445" opacity=".7" filter="url(#fine)"/>
        <polygon points="${pts(FIELD)}" fill="#1f3cc8" fill-opacity=".24" stroke="#1f3cc8" stroke-opacity=".85" stroke-width="5" stroke-linejoin="round"/>
        <g class="label" font-size="14">
          <text font-size="14.500" textLength="85"><textPath href="#streetEast">TORREAUZO</textPath></text>
          <text transform="translate(1602 262) rotate(-29)" font-size="14">GARIBAR</text>
          <text transform="translate(1769 256) rotate(57)" font-size="13" textLength="98" lengthAdjust="spacingAndGlyphs">GORIBAR AUZOA</text>
          <text transform="translate(1187 246) rotate(37)" text-anchor="end" font-size="14">UZO</text>
          <text transform="translate(1079 567) rotate(8.500)" font-size="13" textLength="73" lengthAdjust="spacingAndGlyphs">TORREAUZO</text>
          <text transform="translate(146 365) rotate(84)" font-size="12.500" textLength="73" lengthAdjust="spacingAndGlyphs">TORREAUZO</text>
          <text transform="translate(120 491) rotate(-41)" text-anchor="end" font-size="13.500">REAUZO</text>
          <text transform="translate(880 616) rotate(-55)" text-anchor="end" font-size="14">UZO</text>
          <text x="1090" y="469" font-size="11.500" textLength="57">Etxe-aundi</text>
        </g>
      </svg>
      <div class="controls">
        <div class="group">
          <svg viewBox="0 0 26 26"><path d="M9 13h8M13 9v8" stroke="#333" stroke-width="2"/></svg>
          <svg viewBox="0 0 26 25"><path d="M9 12.500h8" stroke="#333" stroke-width="2"/></svg>
        </div>
        <div class="group">
          <svg viewBox="0 0 26 26"><path d="M9 17.500l8.500-8.500" stroke="#444" stroke-width="1.700"/><path d="M7.500 16.500h2.500v2.500H7.500zM16.500 7.500H19V10h-2.500z" fill="#fff" stroke="#444"/></svg>
          <svg viewBox="0 0 26 25"><path d="M13 6l6 4-1 7-8 2-3-4 1-6z" fill="#444"/></svg>
          <svg viewBox="0 0 26 25"><path d="M8 7h10v10H8z" fill="#444"/></svg>
        </div>
        <div class="group off">
          <svg viewBox="0 0 26 26"><path d="M15 8.500H9.500q-1 0-1 1v8q0 1 1 1h8q1 0 1-1V14" fill="none" stroke="#bbb" stroke-width="1.500"/><path d="M12 15.500l.5-3L17 8l2.500 2.500-4.500 4.500z" fill="#bbb"/></svg>
          <svg viewBox="0 0 26 25"><path d="M8 8h10M11 7.500v-1.500h4v1.500" fill="none" stroke="#bbb" stroke-width="1.300"/><path d="M9 9.500h8.500v8.500H9z" fill="#ccc"/></svg>
        </div>
      </div>
      <div class="credit">Leaflet | © OpenStreetMap contributors</div>`;
    }
}

@customElement('activity-table')
export class ActivityTable extends LitElement {
    static styles = css`
    :host {
      display: block;
      border: 1px solid #dedede;
      background: #fff;
      font-family: Roboto, sans-serif;
      font-size: 15px;
      line-height: 22px;
      color: #212121;
    }

    .row {
      display: grid;
      grid-template-columns: 293px 439.500px 439.500px 440px;
      padding: 10px 0 30px 31px;
      border-bottom: 1px solid #dedede;
    }

    .head { background: #828482; color: #fff; }
    .shape { white-space: pre-line; }
  `;

    rows = [
        {
            worker: 'TestUser',
            distance: '14919.523056697293',
            when: 'Wed Apr 06 2016 10:41:47 GMT+0200 (CEST)',
            shape: `{:type "LineString", :coordinates [[17.0260620117188
51.1556622822393] [17.0356750488281 51.1552316115623]
[17.0679473876953 51.1530781978792] [17.0789337158203
51.1410172240049] [17.0597076416016 51.141448027344]
[17.0466613769531 51.1479095950049] [17.0253753662109
51.1470481049121] [17.0137023925781 51.1410172240049]
[17.0329284667969 51.1362781219332] [17.0555877685547
51.1392939704456] [17.07275390625 51.1349855551216]
[17.0871734619141 51.1345546914769]]}`,
        },
        {
            worker: 'TestUser',
            distance: '4179.880733698533',
            when: 'Wed Apr 06 2016 10:40:33 GMT+0200 (CEST)',
            shape: `{:type "LineString", :coordinates [[17.025032043457
51.1053543155324] [17.0207834243774 51.105327369395]
[17.0165777206421 51.1053543155324] [17.0135307312012
51.1071866160246] [17.0149040222168 51.109423002013]
[17.0232725143433 51.1094768894968] [17.0306539535522
51.109423002013] [17.0356321334839 51.1090188438817]`,
        },
    ];

    render() {
        return html`
      <div class="row head"><div>Trabajador</div><div>Distancia</div><div>Cuándo</div><div>Actividad</div></div>
      ${this.rows.map((r) => html`
        <div class="row"><div>${r.worker}</div><div>${r.distance}</div><div>${r.when}</div><div class="shape">${r.shape}</div></div>
      `)}`;
    }
}

@customElement('app-root')
export class AppRoot extends LitElement {
    static styles = css`
    :host {
      display: block;
      width: 1920px;
      height: 1080px;
      overflow: hidden;
      font-family: Roboto, sans-serif;
      font-size: 15px;
    }

    .desktop { display: flex; }
    .window { width: 1855px; height: 1056px; }

    .header {
      display: grid;
      grid-template-columns: 1fr 50px 1fr;
      align-items: center;
      box-sizing: border-box;
      height: 64px;
      padding: 0 23.500px 0 0;
      background: #828482;
      color: #fff;
    }

    .logo { grid-column: 2; margin-left: 12px; }
    .user { display: flex; align-items: center; justify-content: flex-end; gap: 24px; }

    .page { display: flex; height: 929px; background: #525659; }

    .content {
      flex: 1;
      padding: 20px 20px 0;
      overflow: hidden;
    }

    .title {
      height: 62px;
      line-height: 62px;
      text-align: center;
      background: #fff;
      color: #212121;
    }

    activity-table { margin-top: 8px; }

    .scrollbar {
      display: flex;
      flex-direction: column;
      align-items: center;
      box-sizing: border-box;
      width: 15px;
      padding-bottom: 3px;
      background: #f0f0f0;
    }

    .thumb {
      box-sizing: border-box;
      width: 11px;
      height: 713px;
      background: #bcbcbc;
      border: 1px solid #a3a3a3;
    }

    .scrollbar svg:last-child { margin-top: auto; }
  `;

    render() {
        return html`
      <system-panel></system-panel>
      <div class="desktop">
        <dock-launcher></dock-launcher>
        <div class="window">
          <browser-chrome></browser-chrome>
          <div class="header">
            <svg class="logo" width="50" height="44" viewBox="968 97 50 44">
              <path d="M992.500 101c5 0 8.500 3.500 8.500 8.500 0 4-4 6.500-4.500 10.500h-8c-.5-4-4.500-6.500-4.500-10.500 0-5 3.500-8.500 8.500-8.500z" fill="#fff"/><path d="M988.500 121h8v4.500h-8z" fill="#fff"/>
              <path d="M992.500 103v17M992.500 109l-3-3M992.500 109l3-3M992.500 113l-4-4M992.500 113l4-4M992.500 117l-3-3M992.500 117l3-3" fill="none" stroke="#828482" stroke-width=".8"/>
              <text x="971.500" y="138.500" font-family="Lato, sans-serif" font-size="11" fill="#fff" textLength="42">RULV</text>
            </svg>
            <div class="user">TestUser<svg width="13" height="7"><path d="M0 .5h13l-6.500 6.500z" fill="#fff"/></svg></div>
          </div>
          <div class="page">
            <div class="content">
              <div class="title">Campo 2</div>
              <field-map></field-map>
              <activity-table></activity-table>
            </div>
            <div class="scrollbar">
              <svg width="15" height="14"><path d="M4 9.500L7.500 6 11 9.500z" fill="#a0a0a0"/></svg>
              <div class="thumb"></div>
              <svg width="15" height="10"><path d="M4 3h7L7.500 7z" fill="#505050"/></svg>
            </div>
          </div>
        </div>
      </div>`;
    }
}
